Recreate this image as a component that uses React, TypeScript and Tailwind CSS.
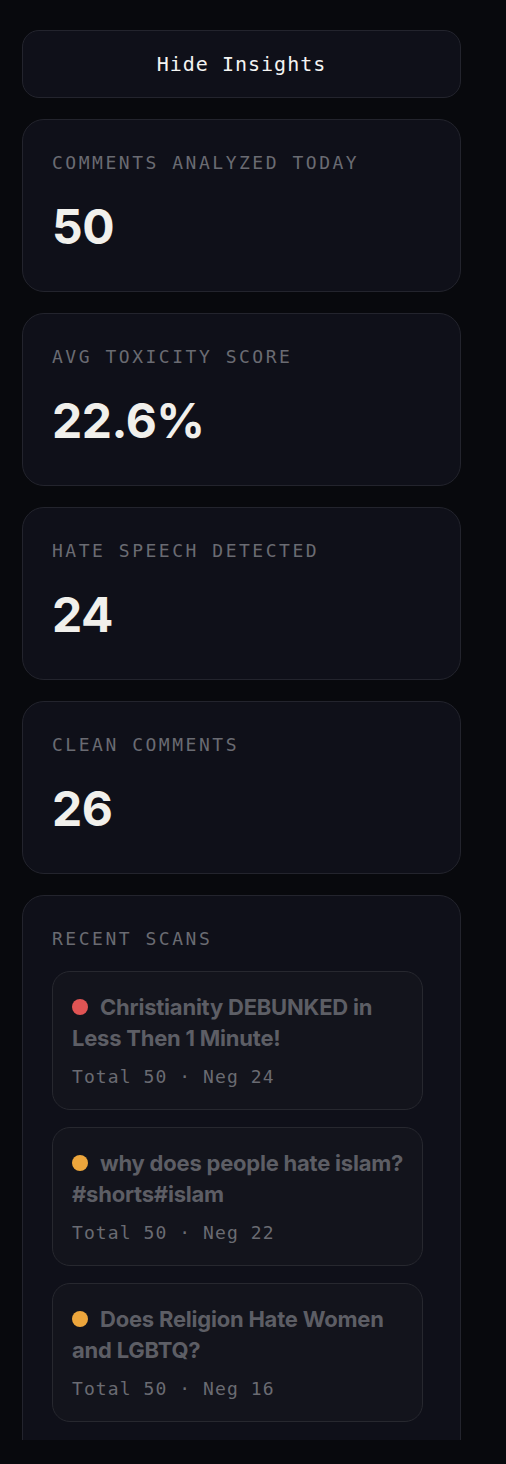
import React from "react";

const mono = "font-['DejaVu_Sans_Mono','Liberation_Mono',monospace]";
const sans = "font-['Inter','Lato',sans-serif]";

function Stat({ label, value }: { label: string; value: string }) {
  return (
    <div className="w-[439px] h-[173px] shrink-0 rounded-[22px] border border-[#23242d] bg-[#0f1019] px-[29px] pt-[31px]">
      <div className={`${mono} text-[18px] leading-[24px] tracking-[0.14em] text-[#6a6b72]`}>{label}</div>
      <div className={`${sans} mt-[24px] text-[48px] leading-[56px] font-bold tracking-[-0.01em] text-[#f1f0ec]`}>{value}</div>
    </div>
  );
}

function Scan({ color, title, total, neg }: { color: string; title: string; total: number; neg: number }) {
  return (
    <div className="w-[371px] h-[139px] shrink-0 rounded-[18px] border border-[#27282f] bg-[#13141c] pl-[19px] pr-[8px] pt-[20px]">
      <div className={`${sans} text-[22px] leading-[31px] font-bold text-[#5d5e65] tracking-[-0.01em]`}>
        <span className={`inline-block w-[16px] h-[16px] rounded-full mr-[12px] align-[0px] ${color}`} />
        {title}
      </div>
      <div className={`${mono} mt-[11px] text-[18px] leading-[24px] tracking-[0.06em] text-[#6a6b72]`}>
        Total {total} · Neg {neg}
      </div>
    </div>
  );
}

export default function App() {
  return (
    <div className="w-[506px] h-[1464px] bg-[#08090d]">
      <div className="h-[1440px] overflow-hidden pt-[30px] pl-[22px] flex flex-col gap-[21px]">
        <button className={`${mono} w-[439px] h-[68px] shrink-0 rounded-[17px] border border-[#23242d] bg-[#0f1019] text-[20px] tracking-[0.05em] text-[#f4f4f2]`}>
          Hide Insights
        </button>
        <Stat label="COMMENTS ANALYZED TODAY" value="50" />
        <Stat label="AVG TOXICITY SCORE" value="22.6%" />
        <Stat label="HATE SPEECH DETECTED" value="24" />
        <Stat label="CLEAN COMMENTS" value="26" />
        <div className="w-[439px] shrink-0 rounded-t-[22px] border border-[#23242d] bg-[#0f1019] px-[29px] pt-[31px] pb-[30px]">
          <div className={`${mono} text-[18px] leading-[24px] tracking-[0.14em] text-[#6a6b72]`}>RECENT SCANS</div>
          <div className="mt-[20px] flex flex-col gap-[17px]">
            <Scan color="bg-[#e05454]" title="Christianity DEBUNKED in Less Then 1 Minute!" total={50} neg={24} />
            <Scan color="bg-[#eda63c]" title="why does people hate islam? #shorts#islam" total={50} neg={22} />
            <Scan color="bg-[#eda63c]" title="Does Religion Hate Women and LGBTQ?" total={50} neg={16} />
          </div>
        </div>
      </div>
    </div>
  );
}
